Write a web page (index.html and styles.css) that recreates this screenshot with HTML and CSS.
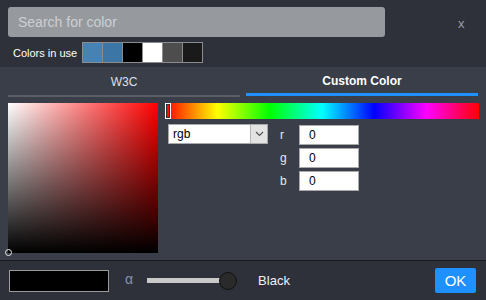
FILE: index.html
```html
<!DOCTYPE html>
<html>
<head>
<meta charset="utf-8">
<link rel="stylesheet" href="styles.css">
</head>
<body>
<div class="dialog">
  <div class="header">
    <div class="search-row">
      <input class="search" type="text" placeholder="Search for color">
      <span class="close">x</span>
    </div>
    <div class="inuse-row">
      <span class="inuse-label">Colors in use</span>
      <div class="swatches">
        <span class="swatch sw1"></span>
        <span class="swatch sw2"></span>
        <span class="swatch sw3"></span>
        <span class="swatch sw4"></span>
        <span class="swatch sw5"></span>
        <span class="swatch sw6"></span>
      </div>
    </div>
  </div>
  <div class="tabs">
    <div class="tab">W3C</div>
    <div class="tab active">Custom Color</div>
  </div>
  <div class="content">
    <div class="sv-box">
      <span class="sv-marker"></span>
    </div>
    <div class="controls">
      <div class="hue-bar"><span class="hue-marker"></span></div>
      <div class="fields">
        <div class="select">
          <span class="select-text">rgb</span>
          <span class="select-btn">
            <svg width="9" height="6" viewBox="0 0 9 6"><path d="M1 1 L4.5 4.5 L8 1" fill="none" stroke="#555" stroke-width="1.2"/></svg>
          </span>
        </div>
        <div class="channels">
          <div class="channel"><span class="ch-label">r</span><span class="ch-input">0</span></div>
          <div class="channel"><span class="ch-label">g</span><span class="ch-input">0</span></div>
          <div class="channel"><span class="ch-label">b</span><span class="ch-input">0</span></div>
        </div>
      </div>
    </div>
  </div>
  <div class="footer">
    <div class="preview"></div>
    <span class="alpha">α</span>
    <div class="slider"><span class="track"></span><span class="thumb"></span></div>
    <span class="name">Black</span>
    <button class="ok">OK</button>
  </div>
</div>
</body>
</html>
```

FILE: styles.css
```css
* { box-sizing: border-box; }
html, body { margin: 0; padding: 0; }
body {
  width: 486px;
  height: 300px;
  overflow: hidden;
  font-family: "Liberation Sans", Arial, sans-serif;
  background: #2e313a;
}
.dialog {
  width: 486px;
  height: 300px;
  display: flex;
  flex-direction: column;
}
.header {
  background: #2e313a;
  height: 67px;
  padding: 7px 0 0 8px;
}
.search-row {
  display: flex;
  align-items: center;
  height: 30px;
}
.search {
  width: 377px;
  height: 30px;
  border: none;
  border-radius: 3px;
  background: #96999e;
  padding: 0 10px;
  font-family: "Liberation Sans", Arial, sans-serif;
  font-size: 14px;
  color: #222;
  outline: none;
}
.search::placeholder { color: #cdd0d4; }
.close {
  margin-left: 73px;
  color: #9a9ea6;
  font-size: 13px;
  margin-top: 3px;
}
.inuse-row {
  display: flex;
  align-items: center;
  margin-top: 5px;
  height: 21px;
}
.inuse-label {
  color: #ffffff;
  font-size: 11px;
  margin-left: 5px;
  width: 69px;
  white-space: nowrap;
}
.swatches {
  display: flex;
  border: 1px solid #8a8c90;
  background: #8a8c90;
  gap: 1px;
  height: 21px;
}
.swatch { width: 19px; height: 19px; display: block; }
.sw1 { background: #4682b4; }
.sw2 { background: #3b76a7; }
.sw3 { background: #000000; }
.sw4 { background: #ffffff; }
.sw5 { background: #4d4d4d; }
.sw6 { background: #1a1a1a; }
.tabs {
  background: #393e49;
  height: 30px;
  display: flex;
  gap: 6px;
  padding: 0 8px 0 8px;
}
.tab {
  flex: 1;
  display: flex;
  align-items: center;
  justify-content: center;
  color: #dde1e8;
  font-size: 12px;
  border-bottom: 2px solid #5b5e64;
  padding-top: 2px;
}
.tab.active {
  color: #ffffff;
  font-weight: bold;
  font-size: 12px;
  border-bottom: 3px solid #1e90ff;
  margin-bottom: 1px;
}
.content {
  background: #393e49;
  flex: 1;
  display: flex;
  padding: 6px 0 0 8px;
  gap: 7px;
}
.sv-box {
  position: relative;
  width: 150px;
  height: 150px;
  background: linear-gradient(to top, #000, rgba(0,0,0,0)), linear-gradient(to right, #fff, #f00);
}
.sv-marker {
  position: absolute;
  left: -3px;
  bottom: -3px;
  width: 7px;
  height: 7px;
  border-radius: 50%;
  border: 1.5px solid #e8e8e8;
}
.controls {
  display: flex;
  flex-direction: column;
}
.hue-bar {
  position: relative;
  width: 314px;
  height: 16px;
  background: linear-gradient(to right, #f00 0%, #ff0 16.66%, #0f0 33.33%, #0ff 50%, #00f 66.66%, #f0f 83.33%, #f00 100%);
}
.hue-marker {
  position: absolute;
  left: 0;
  top: 0;
  width: 6px;
  height: 16px;
  border: 1px solid #fff;
  box-shadow: inset 0 0 0 1px #333;
}
.fields {
  display: flex;
  margin-top: 5px;
  padding-left: 3px;
}
.select {
  width: 100px;
  height: 20px;
  background: #fff;
  border: 1px solid #a9a9a9;
  display: flex;
  align-items: center;
  justify-content: space-between;
}
.select-text {
  font-size: 12px;
  color: #000;
  padding-left: 4px;
}
.select-btn {
  width: 17px;
  height: 18px;
  background: #e3e3e3;
  border-left: 1px solid #b5b5b5;
  display: flex;
  align-items: center;
  justify-content: center;
}
.channels {
  display: flex;
  flex-direction: column;
  gap: 3px;
  margin-left: 12px;
  padding-top: 1px;
}
.channel {
  display: flex;
  align-items: center;
  height: 20px;
}
.ch-label {
  color: #e6e8ee;
  font-size: 12px;
  width: 19px;
}
.ch-input {
  width: 60px;
  height: 20px;
  background: #fff;
  border: 1px solid #a9a9a9;
  font-size: 12px;
  color: #000;
  padding-left: 9px;
  line-height: 18px;
}
.footer {
  height: 40px;
  border-top: 1px solid #17191e;
  background: #2e313a;
  display: flex;
  align-items: center;
  padding: 0 10px 0 9px;
}
.preview {
  width: 100px;
  height: 22px;
  background: #000;
  border: 1px solid #9a9a9a;
}
.alpha {
  color: #8593b0;
  font-size: 14px;
  margin-left: 16px;
  margin-top: -4px;
}
.slider {
  position: relative;
  width: 90px;
  height: 18px;
  margin-left: 14px;
  display: flex;
  align-items: center;
}
.track {
  width: 82px;
  height: 5px;
  background: #c9c9c9;
}
.thumb {
  position: absolute;
  left: 72px;
  top: 0;
  width: 18px;
  height: 18px;
  border-radius: 50%;
  background: #2a2a2a;
  border: 1px solid #111;
}
.name {
  color: #eef0f5;
  font-size: 13px;
  margin-left: 21px;
}
.ok {
  margin-left: auto;
  width: 41px;
  height: 25px;
  background: #1e90ff;
  color: #fff;
  border: none;
  border-radius: 2px;
  font-family: "Liberation Sans", Arial, sans-serif;
  font-size: 15px;
  padding: 0;
}
```
